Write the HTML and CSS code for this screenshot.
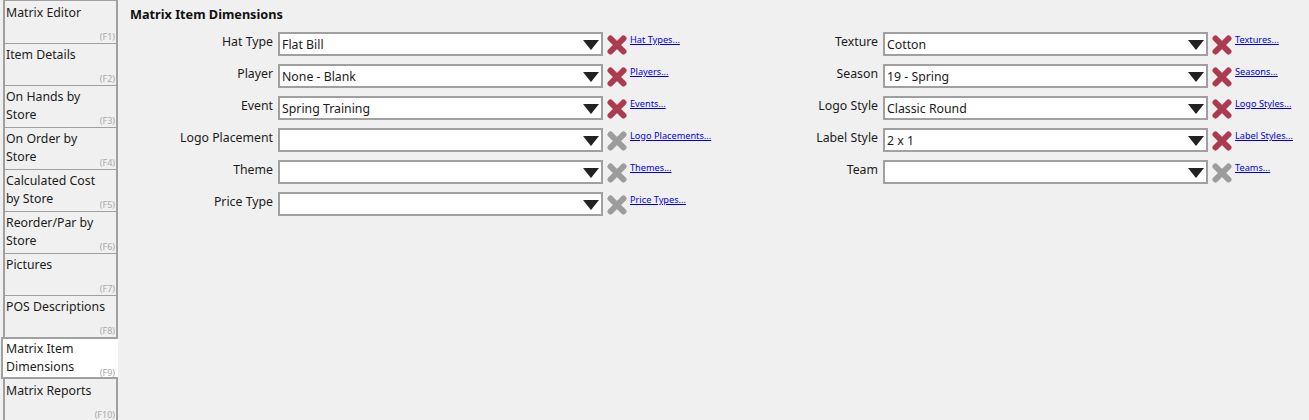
FILE: index.html
```html
<!DOCTYPE html>
<html>
<head>
<meta charset="utf-8">
<title>Matrix Item Dimensions</title>
<link rel="stylesheet" href="styles.css">
</head>
<body>
<svg class="defs" width="0" height="0"><defs><symbol id="x" viewBox="0 0 20 20"><path d="M3.500 3.500L16.500 16.500M16.500 3.500L3.500 16.500" fill="none" stroke="currentColor" stroke-width="6" stroke-linecap="round"/></symbol></defs></svg>
<div class="app">
  <nav class="tabs">
    <div class="tab"><span class="tab-label">Matrix Editor</span><span class="key">(F1)</span></div>
    <div class="tab"><span class="tab-label">Item Details</span><span class="key">(F2)</span></div>
    <div class="tab"><span class="tab-label">On Hands by Store</span><span class="key">(F3)</span></div>
    <div class="tab"><span class="tab-label">On Order by Store</span><span class="key">(F4)</span></div>
    <div class="tab"><span class="tab-label">Calculated Cost by Store</span><span class="key">(F5)</span></div>
    <div class="tab"><span class="tab-label">Reorder/Par by Store</span><span class="key">(F6)</span></div>
    <div class="tab"><span class="tab-label">Pictures</span><span class="key">(F7)</span></div>
    <div class="tab"><span class="tab-label">POS Descriptions</span><span class="key">(F8)</span></div>
    <div class="tab active"><span class="tab-label">Matrix Item Dimensions</span><span class="key">(F9)</span></div>
    <div class="tab after"><span class="tab-label">Matrix Reports</span><span class="key">(F10)</span></div>
  </nav>
  <main class="content">
    <h1 class="title">Matrix Item Dimensions</h1>
    <div class="columns">
      <div class="column">
        <div class="row"><label class="label">Hat Type</label><div class="select"><span>Flat Bill</span><i class="arrow"></i></div><svg class="clear on"><use href="#x"/></svg><a class="link" href="#">Hat Types...</a></div>
        <div class="row"><label class="label">Player</label><div class="select"><span>None - Blank</span><i class="arrow"></i></div><svg class="clear on"><use href="#x"/></svg><a class="link" href="#">Players...</a></div>
        <div class="row"><label class="label">Event</label><div class="select"><span>Spring Training</span><i class="arrow"></i></div><svg class="clear on"><use href="#x"/></svg><a class="link" href="#">Events...</a></div>
        <div class="row"><label class="label">Logo Placement</label><div class="select"><span></span><i class="arrow"></i></div><svg class="clear"><use href="#x"/></svg><a class="link" href="#">Logo Placements...</a></div>
        <div class="row"><label class="label">Theme</label><div class="select"><span></span><i class="arrow"></i></div><svg class="clear"><use href="#x"/></svg><a class="link" href="#">Themes...</a></div>
        <div class="row"><label class="label">Price Type</label><div class="select"><span></span><i class="arrow"></i></div><svg class="clear"><use href="#x"/></svg><a class="link" href="#">Price Types...</a></div>
      </div>
      <div class="column">
        <div class="row"><label class="label">Texture</label><div class="select"><span>Cotton</span><i class="arrow"></i></div><svg class="clear on"><use href="#x"/></svg><a class="link" href="#">Textures...</a></div>
        <div class="row"><label class="label">Season</label><div class="select"><span>19 - Spring</span><i class="arrow"></i></div><svg class="clear on"><use href="#x"/></svg><a class="link" href="#">Seasons...</a></div>
        <div class="row"><label class="label">Logo Style</label><div class="select"><span>Classic Round</span><i class="arrow"></i></div><svg class="clear on"><use href="#x"/></svg><a class="link" href="#">Logo Styles...</a></div>
        <div class="row"><label class="label">Label Style</label><div class="select"><span>2 x 1</span><i class="arrow"></i></div><svg class="clear on"><use href="#x"/></svg><a class="link" href="#">Label Styles...</a></div>
        <div class="row"><label class="label">Team</label><div class="select"><span></span><i class="arrow"></i></div><svg class="clear"><use href="#x"/></svg><a class="link" href="#">Teams...</a></div>
      </div>
    </div>
  </main>
</div>
</body>
</html>
```
FILE: styles.css
```css
html, body {
  margin: 0;
  height: 420px;
  overflow: hidden;
  background: #f0f0f0;
}
body {
  font-family: "Noto Sans", "Open Sans", sans-serif;
  font-size: 12.3px;
  color: #1b1b1b;
}
.defs { display: block; height: 0; }
.app { display: flex; height: 420px; }
.tabs {
  width: 118px;
  flex: none;
  display: flex;
  flex-direction: column;
  padding-top: 1px;
  box-sizing: border-box;
}
.tab {
  height: 42px;
  flex: none;
  box-sizing: border-box;
  margin-left: 3px;
  border-left: 2px solid #a0a0a0;
  border-right: 2px solid #a0a0a0;
  border-top: 1px solid #a0a0a0;
  padding: 2px 0 0 1px;
  position: relative;
  line-height: 18px;
}
.tab:first-child { border-top: 0; padding-top: 3px; box-shadow: 0 -1px 0 #a0a0a0; }
.tab-label { display: block; width: 103px; }
.key {
  position: absolute;
  right: 1px;
  bottom: 1px;
  font-size: 9px;
  line-height: 11px;
  color: #a8a8a8;
}
.tab.active {
  margin-left: 1px;
  background: #fff;
  border: 2px solid #a0a0a0;
  border-right: 0;
  padding: 1px 0 0 3px;
}
.tab.active .key { right: 3px; bottom: -1px; }
.tab.after { border-top: 0; padding-top: 3px; }
.content { flex: 1; padding: 6px 0 0 12px; min-width: 0; }
.title {
  margin: 0 0 10px;
  font-size: 12.7px;
  line-height: 16px;
  font-weight: 700;
  color: #111;
}
.columns { display: flex; }
.column { width: 605px; flex: none; display: flex; flex-direction: column; gap: 8px; }
.row { display: flex; align-items: flex-start; height: 24px; }
.label {
  width: 143px;
  flex: none;
  text-align: right;
  line-height: 18px;
  margin-right: 5px;
  padding-top: 1px;
}
.select {
  width: 325px;
  height: 24px;
  flex: none;
  box-sizing: border-box;
  border: 2px solid #a0a0a0;
  background: #fff;
  display: flex;
  align-items: center;
  justify-content: space-between;
  padding: 0 2px 0 2px;
  line-height: 20px;
}
.select span { padding-top: 1px; }
.arrow {
  width: 0;
  height: 0;
  border-left: 8.500px solid transparent;
  border-right: 8.500px solid transparent;
  border-top: 10px solid #222;
  margin-top: 1px;
}
.clear {
  width: 20px;
  height: 20px;
  flex: none;
  margin: 3px 3px 0 4px;
  color: #9c9c9c;
}
.clear.on { color: #ad3a4e; }
.link {
  font-size: 9.2px;
  line-height: 12px;
  color: #0000ee;
  text-decoration: underline;
  margin-top: 2px;
  white-space: nowrap;
}
```
